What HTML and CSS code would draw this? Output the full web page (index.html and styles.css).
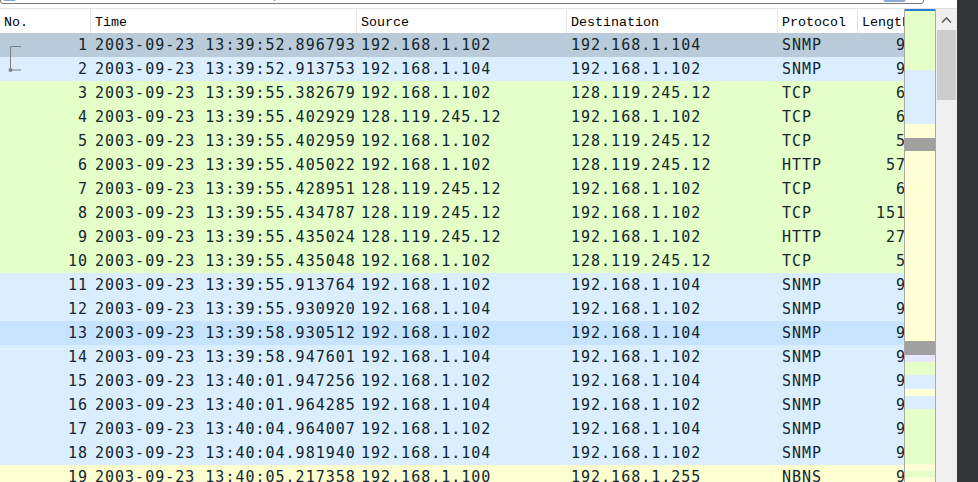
FILE: index.html
```html
<!DOCTYPE html>
<html lang="zh">
<head>
<meta charset="utf-8">
<title>Wireshark packet list</title>
<link rel="stylesheet" href="styles.css">
</head>
<body>
<div class="app">
  <div class="filterbar">
    <div class="filterbox">
      <span class="bm-icon"></span>
      <span class="placeholder">应用显示过滤器 … &lt;Ctrl-/&gt;</span>
      <span class="apply-btn"></span>
    </div>
  </div>
  <div class="pane">
    <div class="list">
      <div class="grid head">
        <div class="hc">No.</div>
        <div class="hc">Time</div>
        <div class="hc">Source</div>
        <div class="hc">Destination</div>
        <div class="hc">Protocol</div>
        <div class="hc">Length</div>
      </div>
      <div class="grid row sel">
        <div class="c num tree"><svg class="treeline" width="24" height="48" viewBox="0 0 24 48"><path d="M10.5 13.5 H21 M10.5 13.5 V37 H21" fill="none" stroke="#808080" stroke-width="1"/><circle cx="10.5" cy="37" r="2" fill="#808080"/></svg>1</div>
        <div class="c">2003-09-23 13:39:52.896793</div><div class="c">192.168.1.102</div><div class="c">192.168.1.104</div><div class="c">SNMP</div><div class="c len">94</div>
      </div>
      <div class="grid row udp">
        <div class="c num">2</div><div class="c">2003-09-23 13:39:52.913753</div><div class="c">192.168.1.104</div><div class="c">192.168.1.102</div><div class="c">SNMP</div><div class="c len">97</div>
      </div>
      <div class="grid row tcp">
        <div class="c num">3</div><div class="c">2003-09-23 13:39:55.382679</div><div class="c">192.168.1.102</div><div class="c">128.119.245.12</div><div class="c">TCP</div><div class="c len">62</div>
      </div>
      <div class="grid row tcp">
        <div class="c num">4</div><div class="c">2003-09-23 13:39:55.402929</div><div class="c">128.119.245.12</div><div class="c">192.168.1.102</div><div class="c">TCP</div><div class="c len">62</div>
      </div>
      <div class="grid row tcp">
        <div class="c num">5</div><div class="c">2003-09-23 13:39:55.402959</div><div class="c">192.168.1.102</div><div class="c">128.119.245.12</div><div class="c">TCP</div><div class="c len">54</div>
      </div>
      <div class="grid row tcp">
        <div class="c num">6</div><div class="c">2003-09-23 13:39:55.405022</div><div class="c">192.168.1.102</div><div class="c">128.119.245.12</div><div class="c">HTTP</div><div class="c len">579</div>
      </div>
      <div class="grid row tcp">
        <div class="c num">7</div><div class="c">2003-09-23 13:39:55.428951</div><div class="c">128.119.245.12</div><div class="c">192.168.1.102</div><div class="c">TCP</div><div class="c len">60</div>
      </div>
      <div class="grid row tcp">
        <div class="c num">8</div><div class="c">2003-09-23 13:39:55.434787</div><div class="c">128.119.245.12</div><div class="c">192.168.1.102</div><div class="c">TCP</div><div class="c len">1514</div>
      </div>
      <div class="grid row tcp">
        <div class="c num">9</div><div class="c">2003-09-23 13:39:55.435024</div><div class="c">128.119.245.12</div><div class="c">192.168.1.102</div><div class="c">HTTP</div><div class="c len">276</div>
      </div>
      <div class="grid row tcp">
        <div class="c num">10</div><div class="c">2003-09-23 13:39:55.435048</div><div class="c">192.168.1.102</div><div class="c">128.119.245.12</div><div class="c">TCP</div><div class="c len">54</div>
      </div>
      <div class="grid row udp">
        <div class="c num">11</div><div class="c">2003-09-23 13:39:55.913764</div><div class="c">192.168.1.102</div><div class="c">192.168.1.104</div><div class="c">SNMP</div><div class="c len">94</div>
      </div>
      <div class="grid row udp">
        <div class="c num">12</div><div class="c">2003-09-23 13:39:55.930920</div><div class="c">192.168.1.104</div><div class="c">192.168.1.102</div><div class="c">SNMP</div><div class="c len">97</div>
      </div>
      <div class="grid row hover">
        <div class="c num">13</div><div class="c">2003-09-23 13:39:58.930512</div><div class="c">192.168.1.102</div><div class="c">192.168.1.104</div><div class="c">SNMP</div><div class="c len">94</div>
      </div>
      <div class="grid row udp">
        <div class="c num">14</div><div class="c">2003-09-23 13:39:58.947601</div><div class="c">192.168.1.104</div><div class="c">192.168.1.102</div><div class="c">SNMP</div><div class="c len">97</div>
      </div>
      <div class="grid row udp">
        <div class="c num">15</div><div class="c">2003-09-23 13:40:01.947256</div><div class="c">192.168.1.102</div><div class="c">192.168.1.104</div><div class="c">SNMP</div><div class="c len">94</div>
      </div>
      <div class="grid row udp">
        <div class="c num">16</div><div class="c">2003-09-23 13:40:01.964285</div><div class="c">192.168.1.104</div><div class="c">192.168.1.102</div><div class="c">SNMP</div><div class="c len">97</div>
      </div>
      <div class="grid row udp">
        <div class="c num">17</div><div class="c">2003-09-23 13:40:04.964007</div><div class="c">192.168.1.102</div><div class="c">192.168.1.104</div><div class="c">SNMP</div><div class="c len">94</div>
      </div>
      <div class="grid row udp">
        <div class="c num">18</div><div class="c">2003-09-23 13:40:04.981940</div><div class="c">192.168.1.104</div><div class="c">192.168.1.102</div><div class="c">SNMP</div><div class="c len">97</div>
      </div>
      <div class="grid row nbns">
        <div class="c num">19</div><div class="c">2003-09-23 13:40:05.217358</div><div class="c">192.168.1.100</div><div class="c">192.168.1.255</div><div class="c">NBNS</div><div class="c len">92</div>
      </div>
    </div>
    <div class="minimap">
      <div class="seg m-sel" style="height:2px"></div>
      <div class="seg m-green" style="height:59px"></div>
      <div class="seg m-blue" style="height:54px"></div>
      <div class="seg m-yellow" style="height:14px"></div>
      <div class="seg m-gray" style="height:13px"></div>
      <div class="seg m-yellow" style="height:190px"></div>
      <div class="seg m-gray" style="height:14px"></div>
      <div class="seg m-lav" style="height:7px"></div>
      <div class="seg m-green" style="height:13px"></div>
      <div class="seg m-blue" style="height:14px"></div>
      <div class="seg m-yellow" style="height:7px"></div>
      <div class="seg m-blue" style="height:13px"></div>
      <div class="seg m-green" style="height:55px"></div>
      <div class="seg m-yellow" style="height:7px"></div>
      <div class="seg m-green" style="height:6px"></div>
      <div class="seg m-yellow" style="height:5px"></div>
    </div>
    <div class="vscroll">
      <div class="arrow"><svg width="21" height="21" viewBox="0 0 21 21"><polyline points="6,13.5 10.5,9 15,13.5" fill="none" stroke="#606060" stroke-width="1.6"/></svg></div>
      <div class="thumb"></div>
    </div>
  </div>
</div>
<div class="dark"></div>
</body>
</html>
```

FILE: styles.css
```css
html, body {
  margin: 0;
  padding: 0;
  height: 482px;
  overflow: hidden;
}
body {
  display: flex;
  background: #ffffff;
}
.app {
  width: 957px;
  height: 482px;
  display: flex;
  flex-direction: column;
  flex: none;
}
.dark {
  flex: 1;
  background: #323539;
}
.filterbar {
  height: 9px;
  flex: none;
  overflow: hidden;
  background: #ffffff;
  box-sizing: border-box;
  border-bottom: 1px solid #e2e2e2;
}
.filterbox {
  width: 924px;
  height: 24px;
  margin-top: -20px;
  box-sizing: border-box;
  border: 1px solid #7a7a7a;
  border-radius: 3px;
  background: #ffffff;
  display: flex;
  align-items: flex-end;
  position: relative;
}
.bm-icon {
  width: 13px;
  height: 13px;
  margin-left: 2px;
  margin-bottom: 2px;
  background: #7aa4d6;
  border-radius: 2px;
  flex: none;
}
.placeholder {
  margin-left: 6px;
  font-family: "Noto Sans CJK SC", "Liberation Sans", sans-serif;
  font-size: 12px;
  color: #555555;
  line-height: 16px;
  margin-bottom: 1px;
  word-spacing: 60px;
}
.apply-btn {
  margin-left: auto;
  margin-right: 17px;
  margin-bottom: 1px;
  width: 23px;
  height: 20px;
  border-radius: 3px;
  background: #8aaad6;
}
.pane {
  flex: 1;
  display: flex;
  min-height: 0;
}
.list {
  width: 904px;
  flex: none;
  overflow: hidden;
}
.grid {
  display: grid;
  grid-template-columns: 91px 266px 210px 211px 80px 61px;
  width: 919px;
  height: 24px;
}
.head {
  background: #ffffff;
}
.hc {
  font-family: "Liberation Mono", "DejaVu Sans Mono", monospace;
  font-size: 13.33px;
  color: #000000;
  line-height: 24px;
  padding-left: 4px;
  padding-top: 2px;
  box-sizing: border-box;
  border-right: 1px solid #e5e5e5;
  white-space: nowrap;
  overflow: hidden;
}
.row .c {
  font-family: "DejaVu Sans Mono", monospace;
  font-size: 15px;
  letter-spacing: 1px;
  color: #12272e;
  line-height: 23px;
  padding-top: 1px;
  padding-left: 4px;
  white-space: nowrap;
  overflow: hidden;
  box-sizing: border-box;
}
.row .num, .row .len {
  text-align: right;
  padding-left: 0;
  padding-right: 3px;
}
.row .tree {
  position: relative;
  overflow: visible;
}
.treeline {
  position: absolute;
  left: 0;
  top: 0;
}
.sel { background: #b9cad8; }
.udp { background: #daeeff; }
.tcp { background: #e4ffc7; }
.hover { background: #c6e3ff; }
.nbns { background: #feffd0; }

.minimap {
  width: 32px;
  flex: none;
  box-sizing: border-box;
  border-left: 1px solid #a8a8a8;
  border-right: 1px solid #a8a8a8;
  display: flex;
  flex-direction: column;
  overflow: hidden;
  background: #feffd6;
}
.seg { flex: none; }
.m-sel { background: #2b7bd8; }
.m-green { background: #e4ffc7; }
.m-blue { background: #daeeff; }
.m-yellow { background: #ffffd6; }
.m-gray { background: #a0a0a0; }
.m-lav { background: #e7e6ff; }

.vscroll {
  width: 21px;
  flex: none;
  background: #f0f0f0;
  display: flex;
  flex-direction: column;
}
.arrow {
  height: 21px;
  flex: none;
}
.arrow svg { display: block; }
.thumb {
  height: 70px;
  margin: 0 1px;
  background: #cdcdcd;
}
```
